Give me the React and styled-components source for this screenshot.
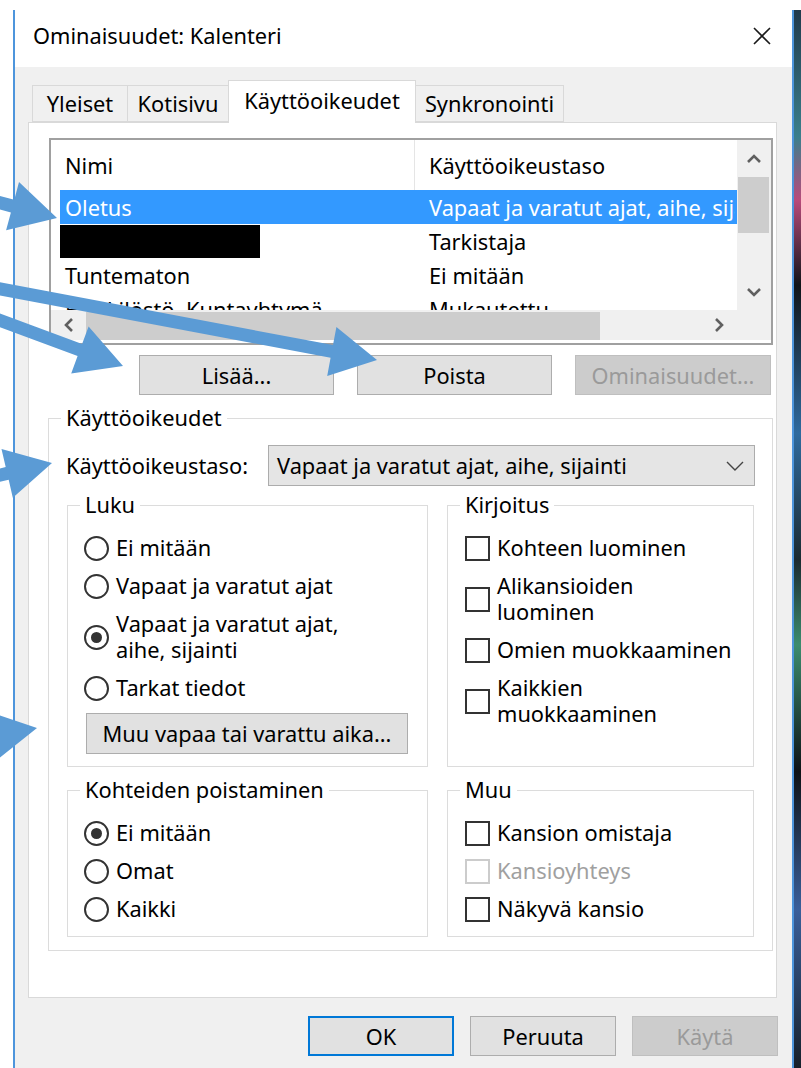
import styled, { createGlobalStyle } from "styled-components";

const ACCENT = "#4d95dc";
const CALLOUT = "#5b9bd5";

const GlobalStyle = createGlobalStyle`
  html, body {
    margin: 0;
    padding: 0;
    background: #fff;
  }
  body {
    font-family: "Noto Sans", "Segoe UI", sans-serif;
    font-size: 21.8px;
    color: #000;
  }
  *, *::before, *::after {
    box-sizing: border-box;
  }
`;

const rows = [
  { name: "Oletus", level: "Vapaat ja varatut ajat, aihe, sijainti", selected: true },
  { name: null, level: "Tarkistaja" },
  { name: "Tuntematon", level: "Ei mitään" },
  { name: "Henkilöstö, Kuntayhtymä", level: "Mukautettu" },
];

// shaft + head outline for a callout arrow from (x1,y1) to the tip (x2,y2)
function arrowPoints(x1, y1, x2, y2, shaft = 13, headLen = 46, headW = 50) {
  const dx = x2 - x1;
  const dy = y2 - y1;
  const len = Math.hypot(dx, dy);
  const ux = dx / len;
  const uy = dy / len;
  const px = -uy;
  const py = ux;
  const bx = x2 - ux * headLen;
  const by = y2 - uy * headLen;
  const s = shaft / 2;
  const h = headW / 2;
  return [
    [x1 + px * s, y1 + py * s],
    [bx + px * s, by + py * s],
    [bx + px * h, by + py * h],
    [x2, y2],
    [bx - px * h, by - py * h],
    [bx - px * s, by - py * s],
    [x1 - px * s, y1 - py * s],
  ]
    .map((p) => p.map((v) => v.toFixed(1)).join(","))
    .join(" ");
}

const callouts = [
  [-40, 192, 57, 218],
  [-20, 285, 377, 360],
  [-20, 313, 123, 366],
  [-30, 482, 52, 463],
  [-60, 745, 37, 728],
];

function Chevron({ dir }) {
  const pts = {
    up: "2,9 8,3 14,9",
    down: "2,3 8,9 14,3",
    left: "9,2 3,8 9,14",
    right: "3,2 9,8 3,14",
  }[dir];
  const vertical = dir === "up" || dir === "down";
  return (
    <svg width={vertical ? 16 : 12} height={vertical ? 12 : 16}>
      <polyline points={pts} fill="none" stroke="#606060" strokeWidth="2.6" />
    </svg>
  );
}

function Radio({ checked, children }) {
  return (
    <Option>
      <RadioMark $checked={checked} />
      <span>{children}</span>
    </Option>
  );
}

function Check({ disabled, children }) {
  return (
    <Option $disabled={disabled}>
      <CheckMark $disabled={disabled} />
      <span>{children}</span>
    </Option>
  );
}

export default function App() {
  return (
    <Screen>
      <GlobalStyle />
      <Gutter />
      <Window>
        <TitleBar>
          <span>Ominaisuudet: Kalenteri</span>
          <svg width="20" height="20">
            <path d="M2 2 L18 18 M18 2 L2 18" stroke="#1a1a1a" strokeWidth="1.6" />
          </svg>
        </TitleBar>

        <TabStrip>
          <Tab $w={96}>Yleiset</Tab>
          <Tab $w={102}>Kotisivu</Tab>
          <Tab $w={188} $active>
            Käyttöoikeudet
          </Tab>
          <Tab $w={149}>Synkronointi</Tab>
        </TabStrip>

        <Panel>
          <ListBox>
            <ListBody>
              <ListRow $header>
                <Cell $first $divider>
                  Nimi
                </Cell>
                <Cell>Käyttöoikeustaso</Cell>
              </ListRow>
              {rows.map((r, i) => (
                <ListRow key={i} $selected={r.selected}>
                  <Cell $first>{r.name ?? <Redacted />}</Cell>
                  <Cell>{r.level}</Cell>
                </ListRow>
              ))}
            </ListBody>
            <VScroll>
              <ScrollButton $h={37}>
                <Chevron dir="up" />
              </ScrollButton>
              <VThumb />
              <ScrollButton $h={37} $push>
                <Chevron dir="down" />
              </ScrollButton>
            </VScroll>
            <HScroll>
              <ScrollButton $w={35}>
                <Chevron dir="left" />
              </ScrollButton>
              <HThumb />
              <ScrollButton $w={36} $push>
                <Chevron dir="right" />
              </ScrollButton>
            </HScroll>
            <ScrollCorner />
          </ListBox>

          <ButtonRow>
            <Button $w={195}>Lisää...</Button>
            <Button $w={195}>Poista</Button>
            <Button $w={196} disabled>
              Ominaisuudet...
            </Button>
          </ButtonRow>

          <OuterGroup>
            <Legend>Käyttöoikeudet</Legend>
            <LevelRow>
              <span>Käyttöoikeustaso:</span>
              <Select>
                <span>Vapaat ja varatut ajat, aihe, sijainti</span>
                <svg width="18" height="10">
                  <polyline points="1,1 9,9 17,1" fill="none" stroke="#444" strokeWidth="1.4" />
                </svg>
              </Select>
            </LevelRow>

            <GroupGrid>
              <Group>
                <Legend>Luku</Legend>
                <Options>
                  <Radio>Ei mitään</Radio>
                  <Radio>Vapaat ja varatut ajat</Radio>
                  <Radio checked>
                    Vapaat ja varatut ajat,
                    <br />
                    aihe, sijainti
                  </Radio>
                  <Radio>Tarkat tiedot</Radio>
                </Options>
                <Button $w={322} $h={41} $inset>
                  Muu vapaa tai varattu aika...
                </Button>
              </Group>

              <Group>
                <Legend>Kirjoitus</Legend>
                <Options>
                  <Check>Kohteen luominen</Check>
                  <Check>
                    Alikansioiden
                    <br />
                    luominen
                  </Check>
                  <Check>Omien muokkaaminen</Check>
                  <Check>
                    Kaikkien
                    <br />
                    muokkaaminen
                  </Check>
                </Options>
              </Group>

              <Group $bottom>
                <Legend>Kohteiden poistaminen</Legend>
                <Options>
                  <Radio checked>Ei mitään</Radio>
                  <Radio>Omat</Radio>
                  <Radio>Kaikki</Radio>
                </Options>
              </Group>

              <Group $bottom>
                <Legend>Muu</Legend>
                <Options>
                  <Check>Kansion omistaja</Check>
                  <Check disabled>Kansioyhteys</Check>
                  <Check>Näkyvä kansio</Check>
                </Options>
              </Group>
            </GroupGrid>
          </OuterGroup>
        </Panel>

        <Footer>
          <Button $w={146} $default>
            OK
          </Button>
          <Button $w={146}>Peruuta</Button>
          <Button $w={146} disabled>
            Käytä
          </Button>
        </Footer>
      </Window>
      <Wallpaper />

      <Callouts width="801" height="1068">
        {callouts.map((a, i) => (
          <polygon key={i} points={arrowPoints(...a)} fill={CALLOUT} />
        ))}
      </Callouts>
    </Screen>
  );
}

const Screen = styled.div`
  position: relative;
  width: 801px;
  height: 1068px;
  overflow: hidden;
  display: flex;
  padding-top: 10px;
  background: #fff;
`;

const Gutter = styled.div`
  flex: none;
  width: 13px;
`;

const Wallpaper = styled.div`
  flex: 1;
  background: linear-gradient(
    180deg,
    #203a4c 0%,
    #3b7f8c 12%,
    #b84a7a 18%,
    #101418 26%,
    #2f6a9e 40%,
    #1b2a30 52%,
    #3c8c6e 60%,
    #0e1216 72%,
    #3a5f9a 85%,
    #16202a 100%
  );
`;

const Window = styled.div`
  flex: none;
  width: 781px;
  display: flex;
  flex-direction: column;
  background: #f0f0f0;
  border-left: 2px solid ${ACCENT};
  border-right: 2px solid ${ACCENT};
`;

const TitleBar = styled.div`
  flex: none;
  height: 57px;
  display: flex;
  align-items: center;
  justify-content: space-between;
  padding: 0 20px 6px 18px;
  background: #fff;
`;

const TabStrip = styled.div`
  position: relative;
  z-index: 1;
  flex: none;
  height: 55px;
  display: flex;
  align-items: flex-end;
  padding-left: 17px;
`;

const Tab = styled.div`
  width: ${(p) => p.$w}px;
  height: ${(p) => (p.$active ? 43 : 37)}px;
  margin-bottom: ${(p) => (p.$active ? -1 : 0)}px;
  margin-left: -1px;
  display: flex;
  align-items: center;
  justify-content: center;
  padding-bottom: ${(p) => (p.$active ? 4 : 1)}px;
  white-space: nowrap;
  background: ${(p) => (p.$active ? "#fff" : "#f0f0f0")};
  border: 1px solid #d9d9d9;
  border-bottom: ${(p) => (p.$active ? "none" : "1px solid #d9d9d9")};

  &:first-child {
    margin-left: 0;
  }
`;

const Panel = styled.div`
  flex: none;
  height: 876px;
  margin: 0 15px 0 13px;
  padding: 15px 3px 0 20px;
  display: flex;
  flex-direction: column;
  background: #fff;
  border: 1px solid #d9d9d9;
`;

const ListBox = styled.div`
  height: 207px;
  display: grid;
  grid-template-columns: 1fr 34px;
  grid-template-rows: 170px 30px 1fr;
  border: 2px solid #a0a0a0;
  background: #fff;
  overflow: hidden;
`;

const ListBody = styled.div`
  overflow: hidden;
`;

const ListRow = styled.div`
  display: grid;
  grid-template-columns: 355px 320px;
  height: ${(p) => (p.$header ? 50 : 34)}px;
  margin-left: 9px;
  align-items: center;
  background: ${(p) => (p.$selected ? "#3399ff" : "transparent")};
  color: ${(p) => (p.$selected ? "#fff" : "#000")};
`;

const Cell = styled.div`
  height: 100%;
  display: flex;
  align-items: center;
  padding-left: ${(p) => (p.$first ? 5 : 14)}px;
  white-space: nowrap;
  overflow: hidden;
  border-right: ${(p) => (p.$divider ? "1px solid #e5e5e5" : "none")};
`;

const Redacted = styled.span`
  display: block;
  flex: none;
  width: 201px;
  height: 33px;
  margin-left: -6px;
  background: #000;
`;

const VScroll = styled.div`
  grid-row: 1;
  grid-column: 2;
  display: flex;
  flex-direction: column;
  background: #f0f0f0;
`;

const HScroll = styled.div`
  grid-row: 2;
  grid-column: 1;
  display: flex;
  background: #f0f0f0;
`;

const ScrollCorner = styled.div`
  grid-row: 2;
  grid-column: 2;
  background: #f0f0f0;
`;

const ScrollButton = styled.div`
  flex: none;
  width: ${(p) => (p.$w ? `${p.$w}px` : "auto")};
  height: ${(p) => (p.$h ? `${p.$h}px` : "auto")};
  margin-${(p) => (p.$w ? "left" : "top")}: ${(p) => (p.$push ? "auto" : "0")};
  display: flex;
  align-items: center;
  justify-content: center;
`;

const VThumb = styled.div`
  height: 56px;
  margin: 0 2px 0 1px;
  background: #cdcdcd;
`;

const HThumb = styled.div`
  width: 514px;
  margin: 2px 0 0;
  background: #cdcdcd;
`;

const ButtonRow = styled.div`
  display: flex;
  justify-content: flex-end;
  gap: 23px;
  margin: 10px 2px 0 0;
`;

const Button = styled.div`
  flex: none;
  width: ${(p) => p.$w}px;
  height: ${(p) => p.$h ?? 40}px;
  margin: ${(p) => (p.$inset ? "12px 0 0 18px" : "0")};
  display: flex;
  align-items: center;
  justify-content: center;
  white-space: nowrap;
  background: ${(p) => (p.disabled ? "#cccccc" : "#e1e1e1")};
  color: ${(p) => (p.disabled ? "#9a9a9a" : "#000")};
  border: ${(p) =>
    p.$default ? "2px solid #0078d7" : `1px solid ${p.disabled ? "#bfbfbf" : "#adadad"}`};
`;

const OuterGroup = styled.fieldset`
  margin: 10px 0 0 -1px;
  padding: 0;
  min-width: 0;
  border: 1px solid #dcdcdc;
`;

const Legend = styled.legend`
  margin-left: 12px;
  padding: 0 5px;
  line-height: 26px;
`;

const LevelRow = styled.div`
  display: flex;
  align-items: center;
  justify-content: space-between;
  padding: 14px 17px 0 17px;
`;

const Select = styled.div`
  width: 487px;
  height: 41px;
  display: flex;
  align-items: center;
  justify-content: space-between;
  padding: 0 10px 0 8px;
  white-space: nowrap;
  background: #e5e5e5;
  border: 1px solid #acacac;
`;

const GroupGrid = styled.div`
  display: grid;
  grid-template-columns: 361px 307px;
  column-gap: 19px;
  row-gap: 10px;
  padding: 6px 17px 13px 18px;
`;

const Group = styled.fieldset`
  margin: 0;
  padding: 0 0 ${(p) => (p.$bottom ? 14 : 12)}px;
  min-width: 0;
  border: 1px solid #dcdcdc;
`;

const Options = styled.div`
  display: flex;
  flex-direction: column;
  gap: 12px;
  padding: 17px 0 0 16px;
`;

const Option = styled.label`
  display: flex;
  align-items: center;
  gap: 7px;
  line-height: 26px;
  white-space: nowrap;
  color: ${(p) => (p.$disabled ? "#a0a0a0" : "#000")};
`;

const RadioMark = styled.span`
  flex: none;
  width: 25px;
  height: 25px;
  display: grid;
  place-items: center;
  border-radius: 50%;
  border: 2px solid #333;
  background: #fff;

  &::after {
    content: "";
    width: 11px;
    height: 11px;
    border-radius: 50%;
    background: ${(p) => (p.$checked ? "#333" : "transparent")};
  }
`;

const CheckMark = styled.span`
  flex: none;
  width: 25px;
  height: 25px;
  margin-left: 1px;
  border: 2px solid ${(p) => (p.$disabled ? "#cccccc" : "#333")};
  background: #fff;
`;

const Footer = styled.div`
  display: flex;
  justify-content: flex-end;
  gap: 16px;
  padding: 18px 14px 0 0;
`;

const Callouts = styled.svg`
  position: absolute;
  left: 0;
  top: 0;
  pointer-events: none;
`;
